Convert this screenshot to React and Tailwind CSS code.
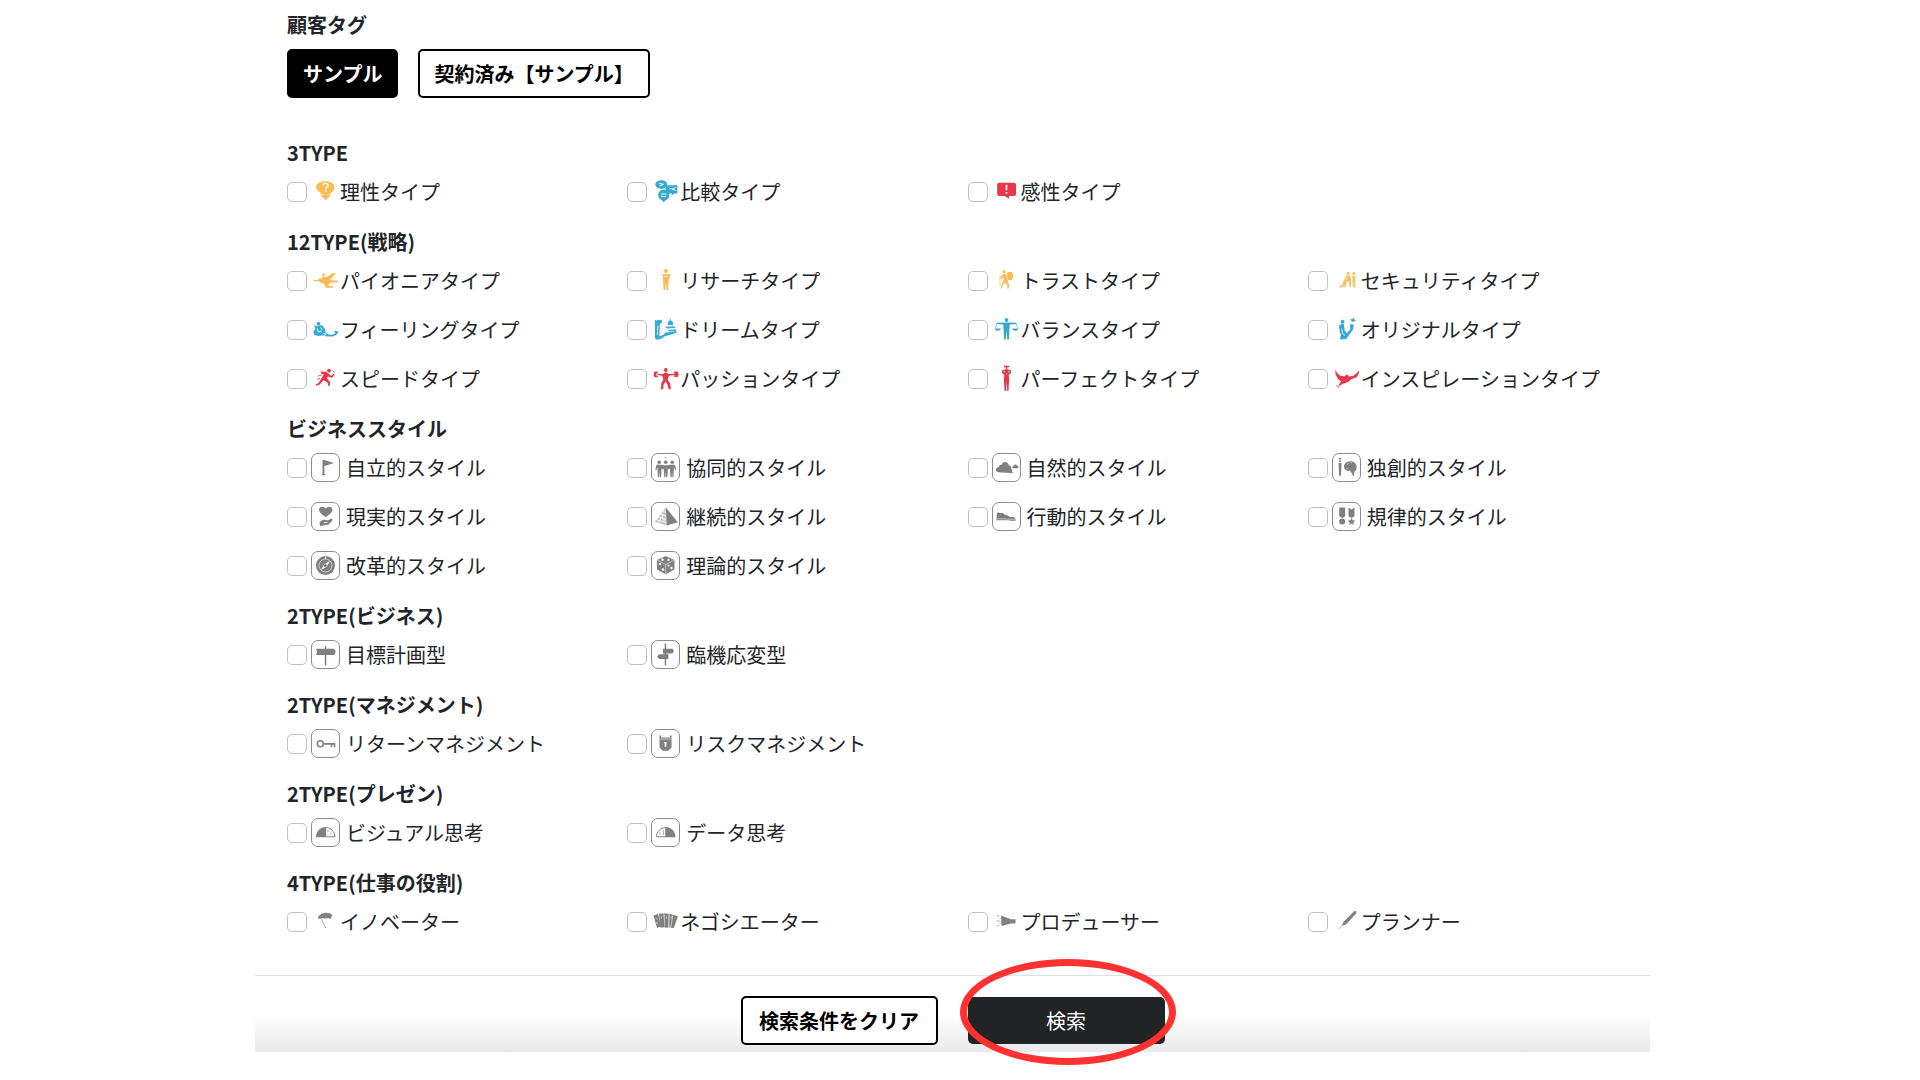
import { useState } from 'react';

const YELLOW = '#fbbc55';
const BLUE = '#36a9d1';
const RED = '#e8364b';
const GRAY = '#808080';

// All icons share a 29x29 canvas
const ICONS = {
  reason: (
    <>
      <path d="M14.5 4.2c5 0 9 2.400 9 6 0 2.800-2 5-4 5.500l.6 1.300-1.200 1.200.3 1.800-2.200.6-2 2.900-2.400-2.700-2.300-.6.3-2-1.600-1.400.8-1.400c-2.600-.8-4.800-2.800-4.800-5.400 0-3.500 4.300-5.800 9.500-5.800z" />
      <path d="M12 8.300c.3-2.600 5.200-2.600 5.100.2 0 1.700-2.400 1.700-2.500 3.500M14.500 13.300v1.400" fill="none" stroke="#fff" strokeWidth="1.500" />
      <path d="M10 17.500h3M16 18h3" stroke="#fff" strokeWidth=".7" />
    </>
  ),
  compare: (
    <>
      <ellipse cx="10.300" cy="7.500" rx="6" ry="4.200" />
      <path d="M14.500 9.500l2-1.300h9.800v8.300h-3l-2.500 1.800v-1.800h-4l-2.300-1.500z" />
      <circle cx="12.800" cy="18" r="5.600" />
      <path d="M10.500 22l2.300 3.400 2-3.400z" />
      <path d="M8 6.300l4.500 1-4 1.500M18.500 11l3.500 1.700M24.500 10.500l-3 1.500 3 1.500M10 17h5.500M10 19.500h5" fill="none" stroke="#fff" strokeWidth="1" />
    </>
  ),
  emotion: (
    <>
      <path d="M7 5.800h15.200a1.900 1.900 0 0 1 1.800 2v9.300a1.900 1.900 0 0 1-1.800 2H17v2.700l-4.300-2.700H7a1.900 1.900 0 0 1-1.800-2V7.800a1.900 1.900 0 0 1 1.800-2z" />
      <path d="M14.500 7.800v5.500M14.500 15v1.700" stroke="#fff" strokeWidth="1.600" />
    </>
  ),
  pioneer: (
    <>
      <path d="M2.200 14h4.300l1.800-1.400 2.400-.3 1.500-1.800 3 .8 7.300-4.500 2.200.5-5.500 6.700 8 .7v1.300l-7.500.7-2.200 1.300v2h4l.7 1.700h-7.500l-1.200-3.500-4.500-2.200-2.700-1-4 .3z" />
      <circle cx="12.500" cy="8.700" r="1.400" />
    </>
  ),
  feeling: (
    <>
      <circle cx="7.500" cy="8.800" r="1.900" />
      <path d="M3 10l2.500 1.200 2.400-.2 3-1 3.300 4.500.5 3.500 3 1.600 3.500.1 3-1.300-.8-2.700 4.200.9-2.200 3.300-3.800 1.700-5.500-.1-3.200-1.200-5.800.6-4-1.200-.7-3 1.800-2.600z" />
      <path d="M6 13.500l1.500 3.500 3-1M9.500 12.500l1.500 2M12.500 18.500l2.500 1" fill="none" stroke="#fff" strokeWidth="1" />
    </>
  ),
  speed: (
    <>
      <circle cx="18" cy="6.700" r="1.900" />
      <path d="M9.500 7.500l5.500.3 3.500 2.700 2 1.400 2.300-2.200 1 1-2.800 3.100-4-1.400-1 1.900 3 3.700-.2 4-1.600-.2-.6-3.300-4.100-2.200-3.800 4.200-3.500 1.200-.2-1.500 2.600-1.100 5.200-8.500-2.300-.8z" />
      <path d="M21.500 6.500l2 2M7 12l4-1M6 15.500l3-1.200" stroke={RED} strokeWidth=".8" />
    </>
  ),
  research: (
    <>
      <circle cx="15" cy="5" r="2" />
      <path d="M11.300 8.300l7.700-.2.500 1.500-1.800 4.400-.4 10h-1.600l-.6-8.500-.8 8.500h-1.700l-.5-10z" />
      <path d="M12.800 10.500h4.500" stroke="#fff" strokeWidth=".8" />
    </>
  ),
  dream: (
    <>
      <path d="M4 5l1.500.7L7 4.500l1.500.8L10.800 4.500v3.200l-2 1.300-.3 12.500 4.700-2.200 1-1.800 5.500-.6 5.300-.9.700 1.700-6.500 2-5.300 1.500-3.200 2.300-3.700 1-1.300.2-1.700-1.500z" />
      <path d="M18.700 5.500l.6-2.700.6 2.700 2 1.500v3h-5V7zM14 11.700l9.500-.4 1 1.500-8.500.8zM17 15l7.500-.8 1 1.500-7 .8z" />
      <path d="M7 10.500l-.6 9.500" stroke="#fff" strokeWidth=".8" />
    </>
  ),
  passion: (
    <>
      <ellipse cx="14.800" cy="6" rx="1.700" ry="2.200" />
      <path d="M6.500 9.700l5.700.3 1.300-1.200h2.600l1.300 1.200 6.200-.3v1.200l-5.800.9-1 4.200 2.300 3.200.9 6h-2.300l-1.300-4.800-1.900-2.900-1.900 3.200-.4 4.500h-2.400l.6-6.200 1.800-3.300-.8-4-4.900-.8z" />
      <path d="M3.500 7.600h3.300v1.700H5.300v2.500h1.500v1.500H3.500l-1-2.500zM23.300 7.600h3.300l1.200 2.800-1.200 2.700h-3.300z" />
    </>
  ),
  trust: (
    <>
      <circle cx="12" cy="5.800" r="1.700" />
      <ellipse cx="17.700" cy="10" rx="3.500" ry="4.200" />
      <path d="M10.500 8.500l3.500-.5 2 5.500-.3 3 1.600 2-.5 4h-1.500v-3.300l-2.300-2.700-2 2.500-1 3.500H8.700l1.300-5 1.700-3.500-.3-2.500-2.400 1.500-1.300-.8z" />
      <path d="M8 9v12" stroke={YELLOW} strokeWidth=".6" />
      <path d="M14.500 8l1.200 6" stroke="#fff" strokeWidth=".6" />
    </>
  ),
  balance: (
    <>
      <circle cx="14.500" cy="5" r="1.900" />
      <path d="M4.500 7.800l8-.3h4l8 .3v1.200l-6.700.6-.4 5.200-.4 9.700h-1.700l-.8-8.500-.8 8.500H12l-.4-9.700-.4-5.200-6.700-.6z" />
      <path d="M2.800 13.500h6c-.5 3-5.500 3-6 0zM20.200 13.500h6c-.5 3-5.500 3-6 0z" />
      <path d="M5 8.500l-1.800 5M24 8.500l1.800 5" stroke={BLUE} strokeWidth=".6" />
    </>
  ),
  perfect: (
    <>
      <path d="M11.800 1.700h5.500v1.500h-2v2h-1.500v-2h-2z" />
      <path d="M10 6.500l3.500-1.200h2l3.700 1.200-.2 2.500-2.300 2 .4 3.500-.6 12.500h-1.400l-.6-10-.6 10h-1.400l-.6-12.500.4-3.500-2.300-2z" />
      <path d="M11.500 7.700h1.500M16.200 7.700h1.500M14.500 9.500v1" stroke="#fff" strokeWidth="1" />
    </>
  ),
  security: (
    <>
      <circle cx="16.200" cy="7.500" r="1.500" />
      <circle cx="21.800" cy="7.600" r="1.500" />
      <path d="M7.300 20.300l3-1 1-3.800 3.200-6 3.800.3.700 3.700v7.500h-1.500l-.5-6-3 1.500-.2 4.500h-1.500v-3l-1 3-4 .4zM20.500 10h2.800l-.3 11.500h-1.500l-.2-6-.8 5z" />
      <path d="M15 11.500l-1.200 3.300" stroke="#fff" strokeWidth=".8" />
    </>
  ),
  original: (
    <>
      <circle cx="10.500" cy="6.700" r="2" />
      <path d="M7 11l2.500-2h2.200l1 6.300 2 3 3.600-4-.3-4.500 2-.8 1.700 1-.7 4.800-3.500 4.500-3 4.500-5.200.8-1.500-1 1.500-4-1.500-2z" />
      <path d="M18 4.800l2-.7 1.500-1 1 1.400 1.500 1-2.200.7-.8 1.300-1-1.200z" />
      <path d="M9.700 13.500l.8 5 2.500 2" fill="none" stroke="#fff" strokeWidth=".8" />
    </>
  ),
  inspiration: (
    <>
      <path d="M3.300 5.800l2 3.400 2.700 2.300 4.500 1 1.500-1.700h1.600l1 1.700 4.400-.5 3.300-2.500 2.500-3 .1 2.500-1.900 4-2.700 1.300-3 .7-2 2.300-3.800 1.700-3.500 1-2 2-1.300-1 2.300-3.500-3-2.500-2.500-4.700z" />
      <path d="M4 21l2.500 2.500M7 21.500l-1 2.500" stroke={RED} strokeWidth=".6" />
    </>
  ),
  flag: <path d="M11.500 7h1.600l10 2.900-9.700 3.200v7.900h1v1.300h-3.800V21h.9z" />,
  care: (
    <>
      <path d="M14.700 15.300C12 13 8 11 8 7.600c0-3.400 5.200-4 6.700-.8 1.500-3.200 6.800-2.600 6.800.8 0 3.400-4 5.400-6.800 7.700z" />
      <path d="M8.500 20l3.500-2.200 5 .4 4.300-2v2.600l-4 4-5 .5-3 1.200z" />
      <path d="M13 20.700l3.500-.3" stroke="#fff" strokeWidth=".8" />
    </>
  ),
  compass: (
    <>
      <circle cx="14.500" cy="14.500" r="9.500" />
      <circle cx="14.500" cy="14.500" r="6.500" fill="none" stroke="#fff" strokeWidth=".6" />
      <path d="M19 10l-3.300 5.700-5.700 3.300 3.300-5.700z" fill="#fff" />
      <circle cx="14.500" cy="14.500" r="1.600" />
      <path d="M14.500 5.500v2.500" stroke="#fff" />
    </>
  ),
  team: (
    <>
      <circle cx="14.700" cy="4.500" r="1" opacity=".5" />
      <circle cx="8.200" cy="9.200" r="1.800" />
      <circle cx="14.700" cy="9.200" r="1.800" />
      <circle cx="21.200" cy="9.200" r="1.800" />
      <path d="M5.500 11.700h5.200l2 .6h4l2-.6h5.200l1.300 5-1 .5-1.300-3-.4 10h-1.100l-.3-5.500-.5 5.500h-1.200l-.4-9-1.300 1.500-.8-1.500-.5 9h-1.200l-.4-5.500-.4 5.500h-1.200l-.5-9-.9 1.500-1.300-1.500-.4 9H8.800l-.5-5.500-.3 5.500H6.900l-.4-10-1.200 3-1-.5z" />
    </>
  ),
  pyramid: (
    <>
      <path d="M14.800 5.500l12 14.800-11 3.200z" />
      <path d="M14.800 5.500l1 18-12-3.500z" opacity=".45" />
      <path d="M12 9.500l3 .8M10 12.300l5 1.500M7.500 15l7.500 2.300M5.500 17.800l9.500 2.800M11.500 13v3M13 17v3M9.500 16v2.500M8 19v2" stroke="#fff" strokeWidth=".8" />
    </>
  ),
  cube: (
    <>
      <path d="M14.700 5l8.800 4v9.500l-8.800 4.800L6 18.500V9z" />
      <path d="M6 9l8.700 4.500L23.500 9M14.700 13.500v9.500" fill="none" stroke="#fff" strokeWidth=".5" />
      <circle cx="11.500" cy="8.700" r="1.200" fill="#fff" />
      <circle cx="17.500" cy="9" r="1.200" fill="#fff" />
      <circle cx="9" cy="13" r="1.200" fill="#fff" />
      <circle cx="12" cy="18.500" r="1.200" fill="#fff" />
      <circle cx="17.500" cy="14.500" r="1" fill="#fff" />
      <circle cx="20.500" cy="17" r="1.200" fill="#fff" />
    </>
  ),
  nature: (
    <>
      <path d="M6.300 19.300c-3.300-.5-3.200-4.900.6-5.200.3-1.900 1.500-2.400 2.600-2.200.8-4 6.700-4 7.500.6 2.200.3 2.500 2 2.200 3.300 1.300.7 1.400 2.500.5 3.200l2.500 1.300z" />
      <path d="M20.800 15.300c-1.200-1.500.2-2.600 1.200-2.500.6-1.800 2.700-1.500 2.900 0 1.800 0 2.200 1.900.9 2.500z" />
    </>
  ),
  creative: (
    <>
      <path d="M6.500 10h3l-.5 12.700H7.200zM6.800 5h2.500v1.600H6.800zM7 7.500h2v1.500H7z" />
      <path d="M12 12.500c1.500-4.500 8-5.300 11-2.500 2.700 2.700 2 7.500-.8 9l-.4 4-1.300-.5-.5-3-1 .5-.7-2.500c-3 1.500-6.800-1.500-6.300-5z" />
      <path d="M15 11.500l1.500-1M18.500 9.800h1.500M14.500 15l1 1" stroke="#fff" strokeWidth=".6" />
    </>
  ),
  shoe: (
    <>
      <path d="M4.800 11.200l1.500-.9 1.500.6h3.500l1 1.500 3 .8 2.200 1.500 3.700.4c2 .4 2.500 1.500 2.500 3.700h-5.200l-2-.6H4.500z" />
      <path d="M4.500 16.800h7l4 .4h8" stroke="#fff" strokeWidth=".5" fill="none" />
    </>
  ),
  medals: (
    <>
      <path d="M7.200 5.500h6v8.800l-3 1.700-3-1.700z" />
      <circle cx="10.200" cy="19.500" r="3" />
      <path d="M16.500 5.500l3 2 3-2v8.800l-3 1.700-3-1.700z" />
      <path d="M19.500 16l1.100 2.300 2.600.3-1.900 1.800.5 2.500-2.300-1.300-2.300 1.300.5-2.500-1.900-1.800 2.600-.3z" />
    </>
  ),
  sign: <path d="M13.800 6.200h1.500v2.600h8l1.400 3-1.400 3.200h-8v10.500h-1.500V15.000H5l1-3.200-1-3h8.800z" />,
  crossroad: <path d="M13.700 3.500h1.500v5.300h6.300l1.500 2.300-1.500 2.300h-6.300v.9h2.200v4.700h-2.200v6.500h-1.500V19H7.800l-1.600-2.400 1.600-2.300h5.900v-.9H12V8.800h1.700z" />,
  keyhole: (
    <>
      <circle cx="9.300" cy="14.700" r="3" fill="none" stroke={GRAY} strokeWidth="1.600" />
      <path d="M12.300 14h12v4.200h-1.600v-2.400h-1.400V18h-1.600v-2.200h-7.400z" />
    </>
  ),
  shield: (
    <>
      <path d="M8.500 6.500h1.500v2h9v-2h1.500v12l-3.200 3.200h-5.600l-3.200-3.200z" />
      <path d="M9.500 10h10" stroke="#fff" strokeWidth=".6" />
      <path d="M13 13h3l-.7 2v2.800h-1.600V15z" fill="#fff" />
    </>
  ),
  visual: (
    <>
      <path d="M5 19.300c0-6 4.500-10.200 9.700-10.200v10.200z" />
      <path d="M14.700 9.600c5.300 0 9.200 4.200 9.300 9.200h-9.300z" fill="none" stroke={GRAY} />
      <path d="M17 12v2M17 16v1.200M20 14.500v2" stroke={GRAY} strokeWidth=".7" />
    </>
  ),
  data: (
    <>
      <path d="M24.500 19.300c0-6-4.500-10.200-9.700-10.200v10.200z" />
      <path d="M14.800 9.600c-5.300 0-9.200 4.200-9.300 9.200h9.300z" fill="none" stroke={GRAY} />
      <path d="M12.300 12v5M9 14.500v2" stroke={GRAY} strokeWidth=".7" />
    </>
  ),
  innovator: (
    <>
      <path d="M7 9.500l4-3 4-.7 4.500.7 2 2-1.300 1.500-.8 2.300-2-1.300-3.400.5-3.500-.5-3 1z" />
      <path d="M9.700 11l5.200 10.200" stroke={GRAY} strokeWidth=".9" opacity=".7" />
    </>
  ),
  negotiator: (
    <>
      <path d="M2.500 8.500l4.500-1.800 3 12.800-4 1.500zM8 6.800l4.500-.5 1 14-4 .5zM13.300 6.300l4.500.4-.5 14-3.500-.2zM18.500 6.800l8.500 2.500-4.300 12-4.500-1z" />
      <path d="M5 10.500l1.500 2M10.500 9.500v2M15.500 9.500v2M20.500 9.500l-.5 2M5.500 15l1 2M21.800 8.500l-2 12" stroke="#fff" strokeWidth=".6" />
    </>
  ),
  producer: (
    <>
      <path d="M9 8.500l10 3.700h4.500v4.300h-4.500L9.500 19z" />
      <path d="M5 8.500l2.500 1M4.800 14h3M5 19l2.500-1M7.500 11.500h1M7.500 16.500h1" stroke={GRAY} strokeWidth=".9" opacity=".7" />
    </>
  ),
  planner: (
    <>
      <path d="M22.500 4l2 .2-.3 2.300-10 10.800-3.700 1.500-.5-.6 1.500-3.500z" />
      <path d="M10.500 17.800l-4 4" stroke={GRAY} strokeWidth=".8" opacity=".7" />
    </>
  ),
};

const SECTIONS = [
  {
    title: '3TYPE',
    items: [
      { label: '理性タイプ', icon: 'reason', color: YELLOW },
      { label: '比較タイプ', icon: 'compare', color: BLUE },
      { label: '感性タイプ', icon: 'emotion', color: RED },
    ],
  },
  {
    title: '12TYPE(戦略)',
    items: [
      { label: 'パイオニアタイプ', icon: 'pioneer', color: YELLOW },
      { label: 'リサーチタイプ', icon: 'research', color: YELLOW },
      { label: 'トラストタイプ', icon: 'trust', color: YELLOW },
      { label: 'セキュリティタイプ', icon: 'security', color: YELLOW },
      { label: 'フィーリングタイプ', icon: 'feeling', color: BLUE },
      { label: 'ドリームタイプ', icon: 'dream', color: BLUE },
      { label: 'バランスタイプ', icon: 'balance', color: BLUE },
      { label: 'オリジナルタイプ', icon: 'original', color: BLUE },
      { label: 'スピードタイプ', icon: 'speed', color: RED },
      { label: 'パッションタイプ', icon: 'passion', color: RED },
      { label: 'パーフェクトタイプ', icon: 'perfect', color: RED },
      { label: 'インスピレーションタイプ', icon: 'inspiration', color: RED },
    ],
  },
  {
    title: 'ビジネススタイル',
    boxed: true,
    items: [
      { label: '自立的スタイル', icon: 'flag' },
      { label: '協同的スタイル', icon: 'team' },
      { label: '自然的スタイル', icon: 'nature' },
      { label: '独創的スタイル', icon: 'creative' },
      { label: '現実的スタイル', icon: 'care' },
      { label: '継続的スタイル', icon: 'pyramid' },
      { label: '行動的スタイル', icon: 'shoe' },
      { label: '規律的スタイル', icon: 'medals' },
      { label: '改革的スタイル', icon: 'compass' },
      { label: '理論的スタイル', icon: 'cube' },
    ],
  },
  {
    title: '2TYPE(ビジネス)',
    boxed: true,
    items: [
      { label: '目標計画型', icon: 'sign' },
      { label: '臨機応変型', icon: 'crossroad' },
    ],
  },
  {
    title: '2TYPE(マネジメント)',
    boxed: true,
    items: [
      { label: 'リターンマネジメント', icon: 'keyhole' },
      { label: 'リスクマネジメント', icon: 'shield' },
    ],
  },
  {
    title: '2TYPE(プレゼン)',
    boxed: true,
    items: [
      { label: 'ビジュアル思考', icon: 'visual' },
      { label: 'データ思考', icon: 'data' },
    ],
  },
  {
    title: '4TYPE(仕事の役割)',
    items: [
      { label: 'イノベーター', icon: 'innovator' },
      { label: 'ネゴシエーター', icon: 'negotiator' },
      { label: 'プロデューサー', icon: 'producer' },
      { label: 'プランナー', icon: 'planner' },
    ],
  },
];

const TAGS = ['サンプル', '契約済み【サンプル】'];

function TypeIcon({ name, color = GRAY, boxed }) {
  return (
    <span
      className={
        boxed
          ? 'mr-[6px] size-[29px] shrink-0 rounded-[7px] border border-[#8c8c8c]'
          : 'size-[29px] shrink-0'
      }
    >
      <svg
        viewBox="0 0 29 29"
        fill={color}
        className={boxed ? '-m-px size-[29px] max-w-none' : 'size-[29px]'}
        aria-hidden="true"
      >
        {ICONS[name]}
      </svg>
    </span>
  );
}

function CheckItem({ item, boxed }) {
  return (
    <label className="flex h-[49px] cursor-pointer items-center whitespace-nowrap">
      <input
        type="checkbox"
        name={item.icon}
        className="mr-[4px] size-[20px] shrink-0 appearance-none rounded-[5px] border border-[#bfbfbf] bg-white checked:border-black checked:bg-black"
      />
      <TypeIcon name={item.icon} color={item.color} boxed={boxed} />
      <span>{item.label}</span>
    </label>
  );
}

function Section({ title, items, boxed }) {
  return (
    <section className="mb-[11px]">
      <h2 className="h-[29px] leading-[29px] font-bold">{title}</h2>
      <div className="grid grid-cols-4">
        {items.map((item) => (
          <CheckItem key={item.label} item={item} boxed={boxed} />
        ))}
      </div>
    </section>
  );
}

export default function App() {
  const [selected, setSelected] = useState(['サンプル']);

  const toggleTag = (tag) =>
    setSelected((prev) => (prev.includes(tag) ? prev.filter((t) => t !== tag) : [...prev, tag]));

  return (
    <div className="min-h-screen bg-white pr-[270px] pl-[255px] font-['Noto_Sans_CJK_JP',sans-serif] text-[20px] leading-[29px] text-[#212529]">
      <form onSubmit={(e) => e.preventDefault()}>
        <div className="pt-[10px] pr-[2px] pb-[18px] pl-[32px]">
          <section className="mb-[40px]">
            <h2 className="mb-[10px] font-bold">顧客タグ</h2>
            <div className="flex gap-[20px]">
              {TAGS.map((tag) => (
                <button
                  key={tag}
                  type="button"
                  onClick={() => toggleTag(tag)}
                  className={`h-[49px] rounded-[5px] border-2 border-black px-[14px] font-bold ${
                    selected.includes(tag) ? 'bg-black text-white' : 'bg-white text-black'
                  }`}
                >
                  {tag}
                </button>
              ))}
            </div>
          </section>

          {SECTIONS.map((section) => (
            <Section key={section.title} {...section} />
          ))}
        </div>

        <footer className="flex items-center justify-center gap-[30px] border-t border-[#dee2e6] bg-linear-to-b from-white from-50% to-[#e9e9e9] pt-[20px] pb-[7px]">
          <button
            type="reset"
            onClick={() => setSelected([])}
            className="h-[49px] w-[197px] rounded-[5px] border-2 border-black bg-white font-bold text-black"
          >
            検索条件をクリア
          </button>
          <div className="relative">
            <button type="submit" className="h-[47px] w-[197px] rounded-[5px] bg-[#212325] text-white">
              検索
            </button>
            {/* Highlight ring */}
            <span className="pointer-events-none absolute -top-[38px] -left-[8px] h-[106px] w-[216px] rounded-[50%] border-7 border-[#ff3131]" />
          </div>
        </footer>
      </form>
    </div>
  );
}
